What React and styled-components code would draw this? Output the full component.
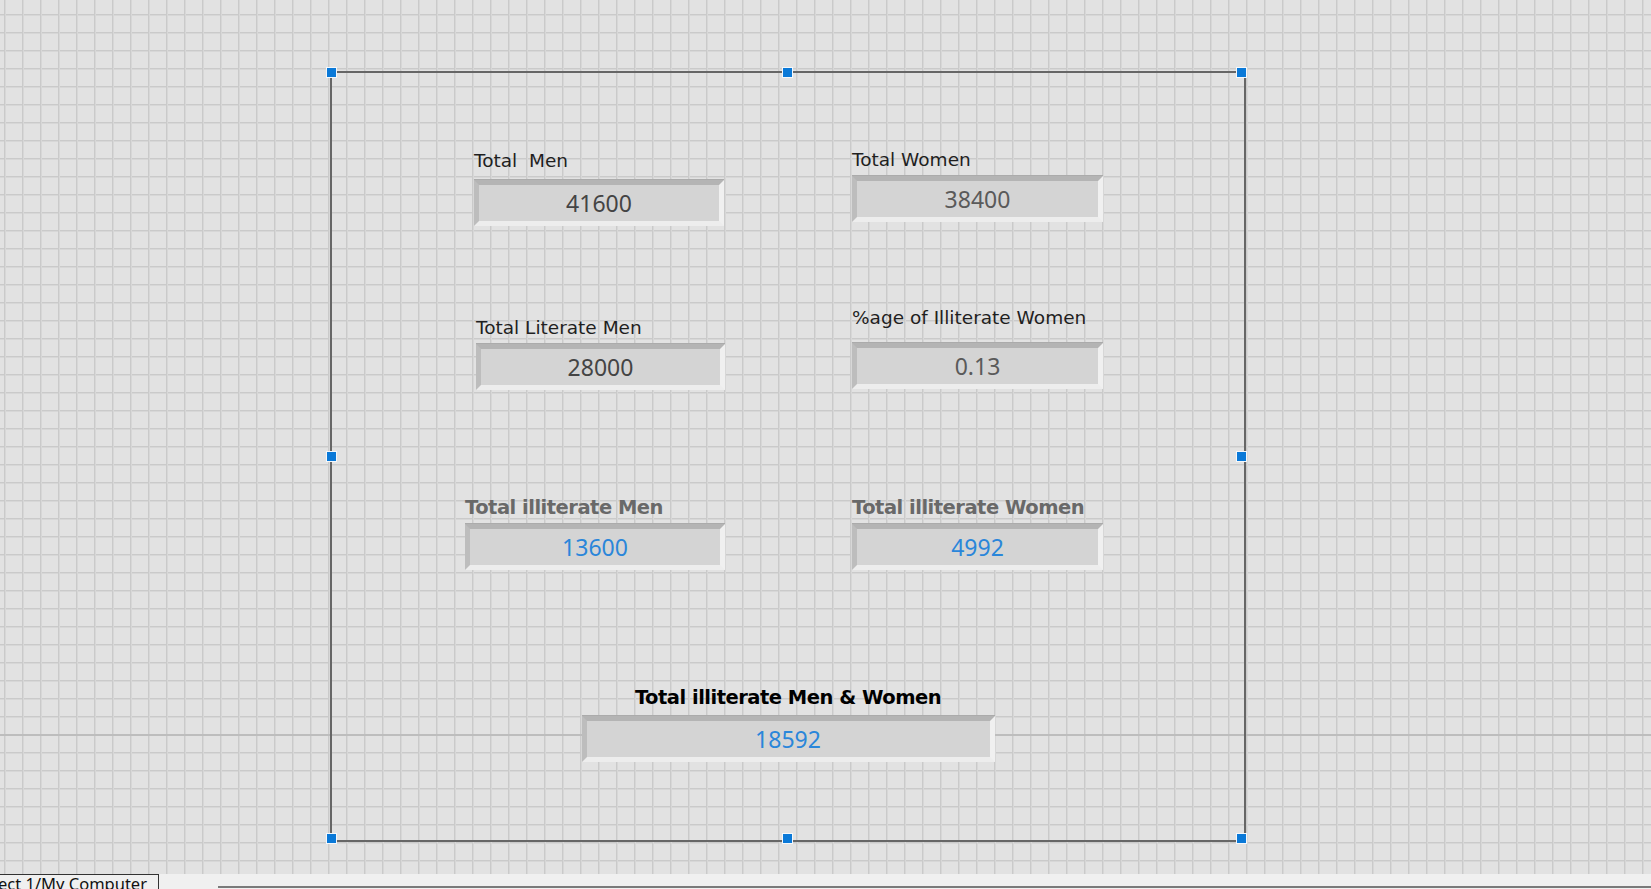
import React from 'react';
import styled, { createGlobalStyle } from 'styled-components';

const GlobalStyle = createGlobalStyle`
    html, body {
        margin: 0;
        padding: 0;
        height: 100%;
        overflow: hidden;
        background: #e2e2e2;
    }

    #root {
        height: 100%;
    }
`;

const Window = styled.div`
    height: 100vh;
    display: flex;
    flex-direction: column;
    overflow: hidden;
`;

const Canvas = styled.div`
    flex: 1;
    box-sizing: border-box;
    padding: 71px 0 0 330px;
    background-color: #e2e2e2;
    background-image:
        linear-gradient(to bottom, transparent 734px, #bdbdbd 734px, #bdbdbd 736px, transparent 736px),
        linear-gradient(to right, #cacaca 0, #cacaca 1px, #d7d7d7 1px, #d7d7d7 2px, transparent 2px),
        linear-gradient(to bottom, #cacaca 0, #cacaca 1px, #d7d7d7 1px, #d7d7d7 2px, transparent 2px);
    background-size: 100% 100%, 18px 18px, 18px 18px;
    background-repeat: no-repeat, repeat, repeat;
    background-position: 0 0, 4px 0, 0 14px;
`;

const Frame = styled.div`
    position: relative;
    box-sizing: border-box;
    width: 916px;
    height: 771px;
    border: 2px solid #666;
    display: flex;
    flex-direction: column;
`;

const Handle = styled.span`
    position: absolute;
    width: 9px;
    height: 9px;
    background: #0a79d8;
    border: 1px solid #f4f8fc;
`;

const Row = styled.div`
    display: flex;
    align-items: flex-start;
    gap: ${(props) => props.$gap || 0}px;
    margin-top: ${(props) => props.$top}px;
    padding-left: ${(props) => props.$left || 0}px;
    justify-content: ${(props) => (props.$center ? 'center' : 'flex-start')};
`;

const FieldWrap = styled.div`
    display: flex;
    flex-direction: column;
    align-items: ${(props) => (props.$center ? 'center' : 'flex-start')};
    margin-top: ${(props) => props.$offset || 0}px;
`;

const Label = styled.div`
    font-family: 'DejaVu Sans', 'Liberation Sans', sans-serif;
    font-size: ${(props) => (props.$bold ? '19.5px' : '18.5px')};
    font-weight: ${(props) => (props.$bold ? 700 : 400)};
    letter-spacing: ${(props) => (props.$bold ? '-0.5px' : '0')};
    line-height: 22px;
    white-space: pre;
    color: ${(props) => props.$color || '#1f1f1f'};
    margin-bottom: ${(props) => props.$gap}px;
`;

const Box = styled.div`
    box-sizing: border-box;
    width: ${(props) => props.$width}px;
    height: 46px;
    border-style: solid;
    border-width: 5px;
    border-top-color: #b4b4b4;
    border-left-color: #bdbdbd;
    border-bottom-color: #ededed;
    border-right-color: #f0f0f0;
    box-shadow: 0 -1px 0 #ababab;
    background: #d4d4d4;
    display: flex;
    align-items: center;
    justify-content: center;
    font-family: 'Noto Sans', 'Open Sans', sans-serif;
    font-size: 23px;
    color: ${(props) => props.$color};
`;

const StatusBar = styled.div`
    height: 15px;
    flex-shrink: 0;
    display: flex;
    align-items: flex-start;
    background: #f0f0f0;
    overflow: hidden;
`;

const Tab = styled.div`
    box-sizing: border-box;
    width: 159px;
    height: 30px;
    flex-shrink: 0;
    border: 1.5px solid #333;
    border-left: none;
    font-family: 'Noto Sans', 'Open Sans', sans-serif;
    font-size: 16.5px;
    line-height: 18px;
    color: #111;
    white-space: nowrap;
    overflow: hidden;
    text-indent: -2px;
`;

const Track = styled.div`
    flex: 1;
    height: 2px;
    margin: 12px 0 0 59px;
    background: #7a7a7a;
`;

const tones = {
    dark: '#444',
    mid: '#5a5a5a',
    blue: '#2a86da',
};

const Field = ({ label, value, width, tone, gap, offset, bold, labelColor, center }) => (
    <FieldWrap $offset={offset} $center={center}>
        <Label $bold={bold} $color={labelColor} $gap={gap}>
            {label}
        </Label>
        <Box $width={width} $color={tones[tone]}>
            {value}
        </Box>
    </FieldWrap>
);

// selection handles, relative to the frame's inner box
const handles = [
    [-6, -6],
    [450, -6],
    [904, -6],
    [-6, 378],
    [904, 378],
    [-6, 760],
    [450, 760],
    [904, 760],
];

const App = () => (
    <Window>
        <GlobalStyle />
        <Canvas>
            <Frame>
                {handles.map(([x, y]) => (
                    <Handle key={`${x}-${y}`} style={{ left: x, top: y }} />
                ))}

                <Row $top={76} $left={142} $gap={128}>
                    <Field label="Total  Men" value="41600" width={250} tone="dark" gap={8} offset={1} />
                    <Field label="Total Women" value="38400" width={251} tone="mid" gap={5} />
                </Row>

                <Row $top={81} $left={144} $gap={127}>
                    <Field label="Total Literate Men" value="28000" width={249} tone="dark" gap={5} offset={10} />
                    <Field label="%age of Illiterate Women" value="0.13" width={251} tone="mid" gap={14} />
                </Row>

                <Row $top={107} $left={133} $gap={127}>
                    <Field
                        label="Total illiterate Men"
                        value="13600"
                        width={260}
                        tone="blue"
                        gap={5}
                        bold
                        labelColor="#696969"
                    />
                    <Field
                        label="Total illiterate Women"
                        value="4992"
                        width={251}
                        tone="blue"
                        gap={5}
                        bold
                        labelColor="#696969"
                    />
                </Row>

                <Row $top={117} $center>
                    <Field
                        label="Total illiterate Men & Women"
                        value="18592"
                        width={413}
                        tone="blue"
                        gap={7}
                        bold
                        labelColor="#000"
                        center
                    />
                </Row>
            </Frame>
        </Canvas>
        <StatusBar>
            <Tab>ect 1/My Computer</Tab>
            <Track />
        </StatusBar>
    </Window>
);

export default App;
